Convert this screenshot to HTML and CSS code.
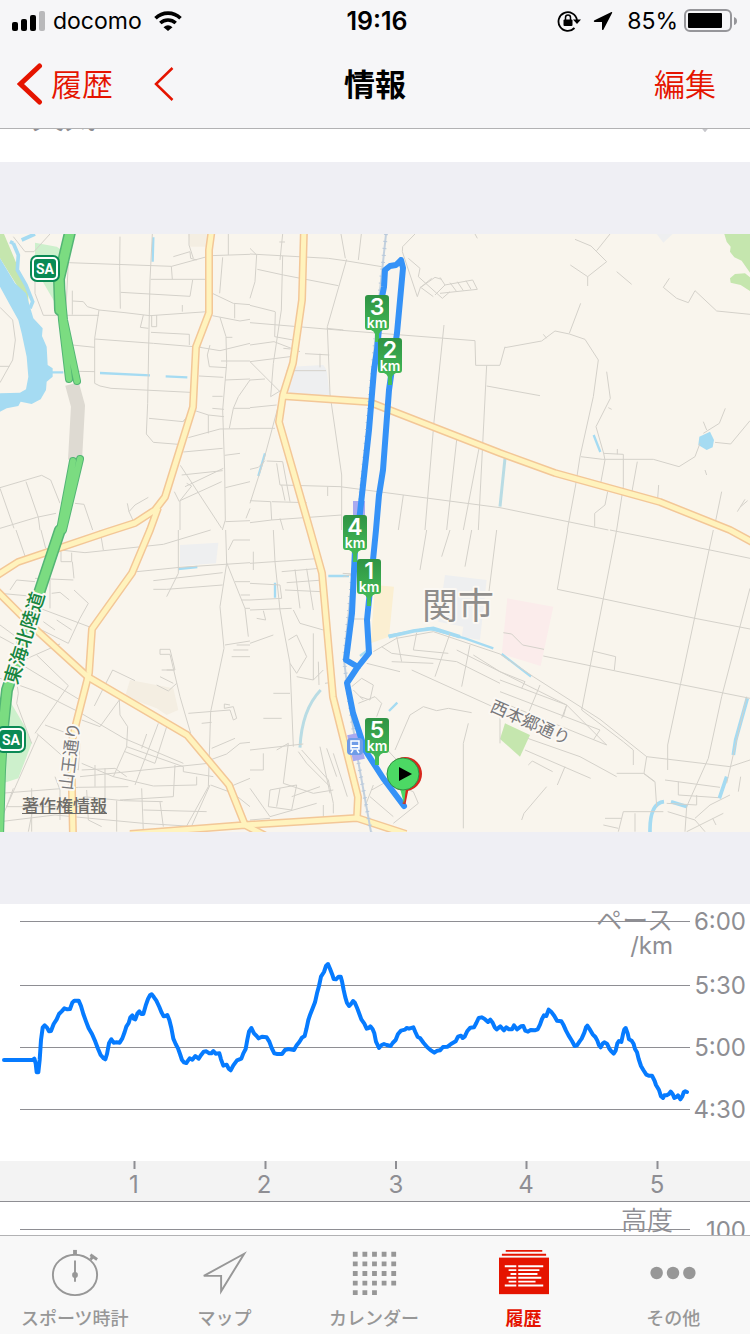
FILE: index.html
```
<!DOCTYPE html>
<html lang="ja">
<head>
    <meta charset="UTF-8">
    <meta name="viewport" content="width=device-width, initial-scale=1.0">
    <title>情報</title>
    <link rel="stylesheet" href="styles.css">
</head>
<body>
    <div class="app">
        <header class="header">
            <div class="status-bar">
                <div class="status-left">
                    <svg class="signal" width="34" height="20" viewBox="0 0 34 20" aria-hidden="true">
                        <rect x="0" y="11" width="6" height="9" rx="2"/>
                        <rect x="9" y="8" width="6" height="12" rx="2"/>
                        <rect x="18" y="4" width="6" height="16" rx="2"/>
                        <rect x="27" y="0" width="6" height="20" rx="2" fill="#b9b9bb"/>
                    </svg>
                    <span>docomo</span>
                    <svg class="wifi" width="28" height="20" viewBox="0 0 28 20" aria-hidden="true">
                        <path d="M1.500 7.200C8.500 .4 19.500 .4 26.500 7.200M6.300 12C10.800 8 17.200 8 21.700 12" fill="none" stroke="#000" stroke-width="3.600"/>
                        <path d="M9.500 16.200Q14 12.200 18.500 16.200L14 20Z"/>
                    </svg>
                </div>
                <time class="clock">19:16</time>
                <div class="status-right">
                    <svg width="24" height="22" viewBox="0 0 24 22" aria-hidden="true">
                        <path d="M17.500 18A9.300 9.300 0 1 1 20 10" fill="none" stroke="#000" stroke-width="1.800"/>
                        <path d="M16 9.500h8l-4 4.500z"/>
                        <rect x="6.500" y="9.500" width="9" height="6.500" rx="1"/>
                        <path d="M8.500 10V7.500a2.500 2.500 0 0 1 5 0V10" fill="none" stroke="#000" stroke-width="1.500"/>
                    </svg>
                    <svg class="location" width="20" height="20" viewBox="0 0 20 20" aria-hidden="true">
                        <path d="M18.500 1 1 9.500Q.4 10.500 1.500 11H9V18.500Q9.800 19.500 10.500 18.500L19.200 1.700Q19.300 .7 18.500 1Z"/>
                    </svg>
                    <span>85%</span>
                    <svg width="54" height="24" viewBox="0 0 54 24" aria-hidden="true">
                        <rect x="1" y="1" width="46" height="21" rx="5" fill="none" stroke="#96969a" stroke-width="2"/>
                        <rect x="4" y="4" width="34" height="15" rx="1"/>
                        <path d="M50 8q3 1 3 4t-3 4z" fill="#96969a"/>
                    </svg>
                </div>
            </div>
            <div class="nav-bar">
                <div class="nav-left">
                    <a class="back" href="#history">
                        <svg width="26" height="42" viewBox="0 0 26 42" aria-hidden="true">
                            <path d="M22.500 3 3.500 21l19 18" fill="none" stroke="#e51400" stroke-width="5" stroke-linecap="round"/>
                        </svg>
                        <span>履歴</span>
                    </a>
                    <button class="previous" type="button" aria-label="前へ">
                        <svg width="20" height="34" viewBox="0 0 20 34" aria-hidden="true">
                            <path d="M18.500 1 2 17l16.500 16" fill="none" stroke="#e51400" stroke-width="2.500"/>
                        </svg>
                    </button>
                </div>
                <h1>情報</h1>
                <button class="edit" type="button">編集</button>
            </div>
        </header>

        <main class="content">
            <a class="weather" href="#weather">
                <span>天気</span>
                <svg width="28" height="28" viewBox="0 0 28 28" aria-hidden="true">
                    <path d="M4 14l10 12 10-12" fill="none" stroke="#c7c7cc" stroke-width="3"/>
                </svg>
            </a>

            <section class="map" aria-label="コース">
                <svg class="map-canvas" viewBox="0 234 750 598">
                    <defs>
                        <linearGradient id="flag" x1="0" y1="0" x2="0" y2="1">
                            <stop offset="0" stop-color="#2f9344"/>
                            <stop offset="1" stop-color="#46c25a"/>
                        </linearGradient>
                        <path id="km-flag" d="M-9 0H9Q12 0 12 3V32Q12 35 9 35H6Q3 36 2 39V47H-2V39Q-3 36 -6 35H-9Q-12 35 -12 32V3Q-12 0 -9 0Z" fill="url(#flag)"/>
                        <g id="sa-sign">
                            <rect x="-15" y="-14" width="30" height="27" rx="7" fill="#0a8a55"/>
                            <rect x="-12" y="-11" width="24" height="21" rx="4" fill="#0a8a55" stroke="#fff" stroke-width="2"/>
                            <text class="sa" y="5">SA</text>
                        </g>
                    </defs>

                    <!-- parks, blocks and water -->
                    <g transform="translate(0 230) scale(.33333)">
                        <path class="wood" d="M0 12H12L45 90 85 190V230L50 165 0 85Z"/>
                        <path class="park" d="M105 38 170 50 185 60 165 218 105 115Z"/>
                        <path class="sand" d="M565 12H620V50H570Z"/>
                        <path class="water" d="M0 85 45 160 78 190 100 265 128 295 126 318 140 350 143 405 158 415V440L140 455 138 480 122 508 95 522 62 515 55 528 20 535 0 545V490L60 488 78 478 85 440 80 380 65 310 55 270 30 225 0 170Z"/>
                        <path class="stream wide" d="M40 40 55 75 52 120 78 165 98 215 90 235M40 40 30 35M65 30 105 12"/>
                        <path class="stream" d="M155 427H190M300 429 450 436M497 439 562 442M460 22 458 95"/>
                        <path class="block" d="M875 410 970 405 980 420 990 498 865 490Z"/>
                        <path class="stream" d="M795 670 775 738M1781 615 1801 666"/>
                        <path class="stream wide faint" d="M1515 685 1500 830"/>
                        <path class="wood" d="M2173 12H2250V128L2225 92 2203 82 2190 65 2192 50 2180 35Z"/>
                        <path class="wood" d="M2190 145 2205 132 2235 130 2250 142V183L2222 165 2192 158Z"/>
                        <path class="water" d="M2098 620 2130 605 2142 630 2138 652 2120 660 2095 645Z"/>
                        <path class="block" d="M1970 12H2018L1990 38Z"/>
                    </g>
                    <g transform="translate(0 530) scale(.33333)">
                        <path class="park" d="M22 500 75 590 95 640 55 745 0 763V500Z"/>
                        <path class="block" d="M540 45 655 38 648 100 540 108Z"/>
                        <path class="sand" d="M390 450 520 475 535 540 500 555 470 535 375 500Z"/>
                        <path class="stream" d="M535 117 592 111M825 158V203M985 138H1047"/>
                        <path class="stream faint wide" d="M962 480Q905 540 900 653"/>
                        <path class="yard" d="M1125 165 1182 170 1167 320 1112 340Z"/>
                        <path class="block" d="M1335 135 1460 150 1440 330 1385 320 1390 290 1315 275Z"/>
                        <path class="hospital" d="M1522 205 1660 230 1622 408 1505 372Z"/>
                        <path class="stream wide" d="M1166 320 1240 303 1300 295 1380 320"/>
                        <path class="stream" d="M1165 317 1285 295 1395 325 1480 355M1505 372 1593 440"/>
                        <path class="stream" d="M1080 378 1110 355M1167 543 1192 518"/>
                        <path class="wood" d="M1515 580 1590 615 1560 680 1500 627Z"/>
                        <path class="stream wide" d="M1950 908Q1948 820 1992 815M2013 815 2062 830M2158 805 2180 740M2200 675 2207 630 2242 505"/>
                    </g>

                    <!-- small streets, north half -->
                    <g class="street" transform="translate(0 230) scale(.33333)">
                        <path d="M205 98 515 109 632 77M205 98 198 235M105 115V190L130 256H297M40 20 75 65 102 65 150 12M360 20 359 110 361 236M457 12 450 150 447 300 443 520 439 612 460 637 535 643M514 109 517 148M452 148H615M362 187 570 199 578 150M520 80 570 65 572 85 590 90M567 12V45L580 85M217 182 217 254M217 213 250 215 262 230 297 240 375 248 450 257 622 245M547 225V245M430 255 421 292 445 295M455 257 455 290H470V255M297 240 284 325V460L300 468 333 475 570 487M284 327 460 340 605 352M217 345 284 352M453 307 568 313V345M235 424 285 425M0 232 38 270 46 330 38 390 0 458M0 409H28"/>
                        <path d="M632 77 750 73M685 12V75M668 82 659 190M637 190 700 220 750 224M704 222V265M637 257 720 273 750 268M660 262 678 320 680 400 668 540 674 720 676 870 667 900M678 322H697M600 352 660 362 750 340M630 345 622 375 628 410 680 413M663 393H750M597 438 670 442M675 450 750 447M750 450 715 500 700 535 688 595M637 499H668M637 535 672 538M700 535H750M588 543 625 555 672 560M625 555V610M587 543 550 572M447 565 550 575 580 533M565 623 660 597 750 596M550 666 668 655M545 735 668 722M674 676 720 670M541 706 665 895M555 770 670 715 M560 760 575 768 540 812V900M676 773 750 755M523 785 538 815M540 812 665 755M738 865 750 835M676 875 750 872"/>
                        <path d="M0 773 125 736 152 750 180 820M0 775 42 895M78 755 115 862 120 900M0 895 110 862 168 850M225 820 252 823 278 900M382 820 387 845 400 873M387 845 405 825 445 802"/>
                        <path d="M750 55 770 75 765 155 750 205M848 12 840 90M838 36H855M750 72 985 85 1035 92 1145 110M1023 12 1036 85M1084 12 1075 90M1040 88 982 290 990 492M772 118 850 135 1015 167M848 78 844 240 820 400 812 500 845 480M750 226 826 245M750 278 1025 301 1425 332 1427 406H1500M980 295 1030 300M826 246 824 320 890 332M750 345 822 335 900 365M850 355 872 357M750 395 870 380M750 395 845 490M750 450 795 447M750 533 830 525M750 595H825M860 422H978M915 371 988 375M960 371V412M990 492 1025 735 1025 900M845 490 790 695 750 820"/>
                        <path d="M1332 285 1302 575 1275 900M1245 12 1208 50 1207 65 1252 200 1262 170M1225 85 1260 115 1255 140 1327 205 1350 185M1295 145 1262 172 1300 200M1320 142 1335 165 1305 195M1335 165 1418 150 1432 178 1320 190M1350 158 1370 185M1372 155 1390 182M1398 152 1413 178M1265 170 1305 142 1325 148M1425 12 1432 25M1515 350 1500 405M1460 406 1435 900M1460 468 1620 497"/>
                        <path d="M1725 28 1773 48 1820 95 1763 140 1711 105M1830 12 1790 62M1763 140V168M1850 125 1895 163M1742 220 1708 310M1630 313 1640 325M1515 353 1625 333 1665 303 1708 312 1755 328 1795 390 1780 500 1740 680 1727 765 1702 900M1820 425 1831 505 1788 590 1811 670 1815 690 1802 760M1825 533 1835 538M2008 145 1990 172 2030 205 2065 218 2085 182 2150 243 2250 253M1742 680 1808 688H1960L2037 710 2085 680 2100 640M2176 535 2158 580 2110 610M2110 575 2120 600M2145 637 2192 642 2250 572M1810 670 1870 673V770L1850 900M1852 657V673M1912 695 1895 790M1976 765 1973 805M1823 785 1815 825 1784 850V890M2165 785 2145 882M2115 720 2120 735M2212 845 2235 808M2222 830 2243 812"/>
                        <path d="M800 693 848 695 870 815M830 700 840 765 1020 770 1500 833 1825 900M845 765 855 812M983 770V798M750 718 775 712 795 692M750 812 812 815 815 870 750 878M815 870 1025 855M815 815 920 818M1370 630 1340 900M1437 655 1390 900M1210 795 1195 900M840 865 850 900"/>
                    </g>

                    <!-- small streets, south half -->
                    <g class="street" transform="translate(0 530) scale(.33333)">
                        <path d="M48 0 75 78M123 0 137 55M180 60 255 68 490 43 632 0M183 65V95H215V68M217 95 222 145M105 145 220 150M30 180 50 150 105 155M0 190 110 200M150 150V235H150M155 190 180 187 208 210M222 180 265 220 240 265 205 340 125 300M112 232 272 292M130 275 165 300M170 270 215 300M300 0 310 60M0 285 45 318M0 320 55 350M60 395 180 342M0 445 125 490 235 545 372 625 550 700M110 375 205 467 105 610M75 410 240 510M45 415 55 490 50 520 95 640M283 528 338 420 405 452M358 510 300 590 245 570M358 510 360 555 383 590 380 650 340 740 245 700M240 640 235 720M135 585 215 615M110 610 235 720M115 615 0 875M475 580 405 765M500 590 465 700 375 665M440 612 425 655M380 650 550 710M550 710V725L640 740M340 740 460 768 590 765 590 740"/>
                        <path d="M0 790 235 772 385 770M40 775 20 830H240M95 775V905M100 830 85 905M165 740 180 780V870M240 740 625 700M245 720 345 715 380 740M285 705V770M315 715V850H250M250 800 370 812 488 815M350 812V905M425 775 430 905M480 815 490 890M525 705 520 800 360 810M430 840 620 845M0 875 165 855 430 880 590 890M260 780 265 870 305 890"/>
                        <path d="M560 888 625 770 632 545 672 355 660 230 680 100 677 0M575 888 630 765M630 690 680 672 720 640 750 637M635 655 705 625M680 98 735 235 745 320M565 550 690 540M605 580 635 577M690 540 700 570 710 565 700 530 673 535V522L690 525M500 420H525L510 358H480V373H510L540 500 572 610M485 420H520M470 465 505 483 530 460M480 440 520 460M410 125 540 112 750 98M460 152 668 128M535 0V130L500 200M460 178H500L668 165M685 60 700 30H750M705 155H750M722 195H750M725 210H750M735 235H750M675 345 750 333M710 345H750M695 380H750M700 360H745M632 765 700 790 750 830M690 770 750 745"/>
                        <path d="M820 0 825 95 840 240 870 400 880 650M750 100 965 85M845 125 960 115 970 150 860 158M885 118 900 235M920 116 940 240M855 180 965 185M750 160 840 165 845 205 750 210M760 65V120M750 240 875 235M750 340 820 315M790 242 797 270 770 265M880 240 900 280 970 300M865 330 890 315 920 380 890 430 870 400M955 395 957 465M820 490H870M890 440 940 450 970 420M940 310V450M975 460 995 457M845 565H790M750 660 910 642M790 670V720H750M1028 130 1060 132 1030 140M1055 267H1095M1000 670 1042 800M960 650 990 790M980 655 1010 740M830 660 865 640 850 760 940 790 1000 780"/>
                        <path d="M905 660 985 750 1000 820 1000 850M895 665 920 700 990 770M750 775 810 860 950 820M810 780 890 765 875 840 805 830ZM840 775 830 830M875 800 960 770M970 825V860M750 870 810 865M1055 470 1085 445 1120 465 1110 510 1080 500M1075 520 1125 500 1145 520 1130 560M1060 480 1090 510M1185 660 1230 555 1270 530 1310 542 1345 535 1415 548M1405 580 1390 640V895M1115 780 1160 755 1240 785 1255 820 1180 880M1110 800 1180 860M1120 765 1095 830M1135 630 1190 690M1110 620 1125 650M1060 680 1110 640"/>
                        <path d="M1280 0 1260 120M1350 0 1325 80M1415 0 1395 110M1490 0 1465 200M1120 365 1190 325 1300 305 1500 372 1600 440 1800 568 1940 680 1932 730 1965 755 1970 830M1145 350 1175 370 1370 395 1500 460M1250 308 1240 360 1345 370M1175 395 1300 400M1100 400 1200 425M1190 320 1205 395M1350 310 1305 440M1410 345 1385 470M1235 420 1500 540 1500 640M1370 360 1700 525 1690 560M1420 375 1500 425 1575 455 1565 475M1500 450 1700 525 1820 645M1500 485 1800 600 1780 630M1620 465 1585 550M1700 525 1685 565M1820 645 1500 515"/>
                        <path d="M1703 0 1672 178 1807 206 2085 265 2250 297M1850 0 1745 540M2140 0 2042 460 2003 645V720M1830 0 2130 60 2250 85M2250 175 2165 500 2125 685 2060 830M1630 378 2040 463 2250 505M1510 308 1535 312 1568 345 1632 358M1778 363 1847 380 1843 420M2240 500 2180 760M1745 540 1870 635 1900 660V705M1940 680 2190 710 2250 690M1583 625 1740 680 1850 740M1850 730H1930L1963 755M1575 660 1772 745M1695 710 1672 765M1585 705 1597 693 1658 725M1640 770 1572 850 1565 870M1995 750 2160 772M2035 755V795L2155 803M2090 795V825L2000 820M2003 845 2085 870 2115 905M1990 845H1870L1855 905M1815 865H1865M1810 885 1855 895M1905 850V905M2060 830 2055 905M2085 865 2130 825 2190 795M2060 905 2170 850M2138 865 2148 885M2222 740 2215 785"/>
                    </g>

                    <!-- main roads -->
                    <g class="road-edge">
                        <path d="M212 228 209 250V313L196 347 193 407 165 497 155 510 135 523 107 532 18 562-4 576M158 508 150 530 132 573 92 629 89 673 77 720 71 745 73 836"/>
                        <path d="M-4 590 33 627 88 677 187 735 229 785 245 825 266 836M130 834 245 825 357 818 406 834"/>
                        <path d="M304 228 302 300 293 363 283 395 279 422 310 530 322 573 333 697 358 797 357 818M283 396 369 402 500 453 555 473 660 502 730 530 754 543"/>
                    </g>
                    <g class="road">
                        <path d="M212 228 209 250V313L196 347 193 407 165 497 155 510 135 523 107 532 18 562-4 576M158 508 150 530 132 573 92 629 89 673 77 720 71 745 73 836"/>
                        <path d="M-4 590 33 627 88 677 187 735 229 785 245 825 266 836M130 834 245 825 357 818 406 834"/>
                        <path d="M304 228 302 300 293 363 283 395 279 422 310 530 322 573 333 697 358 797 357 818M283 396 369 402 500 453 555 473 660 502 730 530 754 543"/>
                    </g>

                    <!-- expressway -->
                    <path class="tunnel" d="M72 384 78 406 75 460"/>
                    <path class="way-wide-edge" d="M71 228 59 279 60 310M60 530 45 575 7 690 1 745"/>
                    <path class="way-edge" d="M59 279 62 320 69 379M60 279 64 320 77 381M73 461 60 530M80 459 63 530M7 690 2 770 0 836"/>
                    <path class="way-wide" d="M71 228 59 279 60 310M60 530 45 575 7 690 1 745"/>
                    <path class="way" d="M59 279 62 320 69 379M60 279 64 320 77 381M73 461 60 530M80 459 63 530M7 690 2 770 0 836"/>

                    <!-- railway and stations -->
                    <path class="rail" d="M386 234 379 300 366 440 357 530 344 660 349 700 358 760 371 832"/>
                    <path class="rail-ties" d="M386 234 379 300 366 440 357 530 344 660 349 700 358 760 371 832"/>
                    <path class="platform" d="M359 501V516M353 734 359 760"/>

                    <!-- route -->
                    <path class="route" d="M404 806 383 778 365 750 353 713 347 683 357 668 369 653 367 620 369 600 376 530 379 495 383 470 389 390 397 333 403 268 401 260 396 265 390 266 385 270 384 287 382 297 377 350 374 370 369 430 360 513 355 550 352 613 346 660 358 667"/>

                    <rect x="347" y="738" width="16" height="17" rx="4" fill="#6f9ce8"/>
                    <path d="M351 741h8v8h-8zM353 750l-2 3M357 750l2 3" fill="none" stroke="#fff" stroke-width="1.500"/>
                    <path d="M351 746h8" stroke="#fff" stroke-width="2"/>

                    <!-- place names -->
                    <text class="city" x="458" y="619">関市</text>
                    <text class="street-name" transform="translate(528 728) rotate(24)">西本郷通り</text>
                    <text class="street-name" transform="translate(76 757) rotate(-83)">山王通り</text>
                    <text class="way-name" transform="translate(31 640) rotate(-73)">東海北陸道</text>
                    <use href="#sa-sign" x="45" y="269"/>
                    <use href="#sa-sign" x="11" y="740"/>

                    <!-- kilometre flags -->
                    <g transform="translate(377 295)"><use href="#km-flag"/><text class="km" y="20">3</text><text class="unit" y="33">km</text></g>
                    <g transform="translate(390 338)"><use href="#km-flag"/><text class="km" y="20">2</text><text class="unit" y="33">km</text></g>
                    <g transform="translate(355 515)"><use href="#km-flag"/><text class="km" y="20">4</text><text class="unit" y="33">km</text></g>
                    <g transform="translate(369 559)"><use href="#km-flag"/><text class="km" y="20">1</text><text class="unit" y="33">km</text></g>
                    <g transform="translate(377 718)"><use href="#km-flag"/><text class="km" y="20">5</text><text class="unit" y="33">km</text></g>

                    <!-- start pin on top of the goal pin -->
                    <path d="M407 789 404 804" stroke="#d8261c" stroke-width="3"/>
                    <circle cx="405" cy="774" r="17" fill="#d8261c"/>
                    <path d="M400 788H406L404 804Z" fill="#4cd964"/>
                    <circle cx="403" cy="774" r="16" fill="#4cd964" stroke="#2f9344"/>
                    <path d="M399 767V781L412 774Z"/>
                </svg>
                <a class="copyright" href="#legal">著作権情報</a>
            </section>

            <section class="chart" aria-label="ペース">
                <svg viewBox="0 904 750 257">
                    <path class="grid" d="M20 921.500H690M20 985.500H690M20 1047.500H690M20 1109.500H690"/>
                    <text class="axis end title" x="673" y="930">ペース</text>
                    <text class="axis end" x="673" y="954">/km</text>
                    <text class="axis end" x="746" y="930">6:00</text>
                    <text class="axis end" x="746" y="994">5:30</text>
                    <text class="axis end" x="746" y="1056">5:00</text>
                    <text class="axis end" x="746" y="1118">4:30</text>
                    <polyline class="pace" transform="translate(0 900) scale(.33333)" points="12,480 98,480 103,476 107,490 110,517 115,517 119,480 123,420 128,383 134,376 141,383 147,394 153,393 161,372 170,358 177,342 185,334 193,325 202,328 210,327 217,308 223,302 236,302 243,318 250,342 258,364 266,385 276,402 286,425 294,446 302,465 311,475 316,478 321,462 327,430 334,418 341,428 350,427 359,428 367,415 374,396 379,380 386,369 391,352 397,346 401,356 406,358 412,341 418,334 424,342 430,342 437,317 444,297 450,286 455,283 462,292 469,302 478,321 485,338 491,349 497,348 502,345 508,360 514,384 520,416 527,432 534,445 540,462 546,480 552,487 559,489 564,482 569,475 577,479 586,468 596,476 604,464 611,455 619,454 628,460 634,460 640,453 647,461 658,460 663,478 670,497 680,494 686,506 692,511 700,496 711,481 724,476 730,460 737,447 742,419 747,395 754,384 762,400 770,408 776,415 786,410 800,412 808,425 815,444 823,460 832,462 846,462 855,450 865,447 882,450 890,436 898,426 906,413 914,408 919,388 925,360 930,345 938,325 945,307 951,280 957,258 963,230 972,216 978,198 984,192 990,206 997,224 1001,237 1008,238 1016,230 1022,230 1026,244 1031,270 1036,292 1041,309 1047,318 1053,312 1059,303 1065,309 1071,323 1077,339 1084,358 1093,371 1100,386 1106,384 1111,379 1118,388 1123,400 1128,425 1137,444 1145,435 1152,432 1160,435 1172,438 1178,429 1187,420 1194,402 1203,392 1215,389 1220,384 1227,386 1240,382 1246,396 1253,411 1260,414 1271,429 1282,442 1294,452 1303,458 1312,452 1320,451 1329,441 1343,440 1353,432 1367,424 1374,410 1383,407 1388,414 1394,410 1402,393 1411,383 1422,382 1429,369 1436,354 1445,352 1453,356 1464,366 1471,359 1478,368 1484,382 1490,388 1501,379 1512,391 1519,382 1527,388 1536,388 1542,376 1551,388 1563,379 1570,378 1576,392 1584,395 1592,390 1604,391 1613,388 1620,374 1626,357 1632,346 1639,348 1646,329 1655,337 1663,348 1671,362 1684,364 1691,376 1698,392 1706,407 1716,423 1724,438 1731,436 1739,424 1745,416 1753,398 1758,382 1762,377 1770,389 1778,403 1786,411 1792,422 1797,436 1802,442 1808,431 1813,427 1821,431 1828,446 1835,455 1841,461 1847,452 1852,430 1857,423 1864,426 1869,403 1873,388 1877,384 1883,400 1887,418 1895,422 1901,432 1905,447 1911,457 1916,477 1923,498 1930,510 1939,524 1946,527 1956,527 1964,543 1968,555 1977,570 1983,589 1989,594 1993,586 2000,586 2007,582 2012,575 2018,582 2023,594 2029,591 2034,586 2041,598 2047,589 2051,577 2056,574 2061,576"/>
                </svg>
                <svg class="distance-axis" viewBox="0 0 750 40">
                    <path class="tick" d="M134.500 0V8M265.500 0V8M396 0V8M526.500 0V8M657.500 0V8"/>
                    <text class="axis middle" x="134" y="32">1</text>
                    <text class="axis middle" x="264" y="32">2</text>
                    <text class="axis middle" x="396" y="32">3</text>
                    <text class="axis middle" x="526" y="32">4</text>
                    <text class="axis middle" x="657" y="32">5</text>
                </svg>
            </section>

            <section class="chart" aria-label="高度">
                <svg viewBox="0 0 750 257">
                    <path class="grid" d="M20 27.500H690M20 91.500H690M20 153.500H690"/>
                    <text class="axis end title" x="673" y="28">高度</text>
                    <text class="axis end" x="746" y="37">100</text>
                </svg>
            </section>
        </main>

        <nav class="tab-bar">
            <a class="tab" href="#stopwatch">
                <svg width="52" height="52" viewBox="0 0 52 52" aria-hidden="true">
                    <ellipse cx="26" cy="28" rx="23" ry="21" fill="none" stroke="currentColor" stroke-width="2"/>
                    <path d="M26 2v5" stroke="currentColor" stroke-width="4"/>
                    <path d="M26 13v22" stroke="currentColor" stroke-width="2"/>
                    <circle cx="26" cy="28" r="3" fill="currentColor"/>
                    <path d="M42 12l4-4M42 7l7 5" stroke="currentColor" stroke-width="3"/>
                </svg>
                <span>スポーツ時計</span>
            </a>
            <a class="tab" href="#map">
                <svg width="52" height="52" viewBox="0 0 52 52" aria-hidden="true">
                    <path d="M47 6 5 29H23V45Z" fill="none" stroke="currentColor" stroke-width="2"/>
                </svg>
                <span>マップ</span>
            </a>
            <a class="tab" href="#calendar">
                <svg width="52" height="52" viewBox="0 0 52 52" aria-hidden="true">
                    <path d="M4 6.500H50M4 16.500H50M4 26.500H50M4 36.500H50M4 46.500H29" stroke="currentColor" stroke-width="5" stroke-dasharray="5 5"/>
                </svg>
                <span>カレンダー</span>
            </a>
            <a class="tab active" href="#history">
                <svg width="52" height="52" viewBox="0 0 52 52" aria-hidden="true">
                    <path d="M7 3H45M3 7H49" stroke="currentColor" stroke-width="2"/>
                    <rect x="0" y="10" width="52" height="38" fill="currentColor"/>
                    <path d="M6 19H18M20 19H46M10 23H18M20 23H42M12 27H18M20 27H40M8 31H18M20 31H44M10 35H18M20 35H38M6 39H18M20 39H46" stroke="#fff" stroke-width="2"/>
                </svg>
                <span>履歴</span>
            </a>
            <a class="tab" href="#other">
                <svg width="52" height="52" viewBox="0 0 52 52" aria-hidden="true">
                    <g fill="currentColor">
                        <circle cx="9" cy="26" r="6.500"/>
                        <circle cx="26" cy="26" r="6.500"/>
                        <circle cx="43" cy="26" r="6.500"/>
                    </g>
                </svg>
                <span>その他</span>
            </a>
        </nav>
    </div>
</body>
</html>
```
FILE: styles.css
```
/* General Styles */
* {
    box-sizing: border-box;
}

body {
    margin: 0;
    background-color: #efeff4;
    font-family: Inter, "Noto Sans CJK JP", sans-serif;
    color: #000;
}

a {
    color: inherit;
    text-decoration: none;
}

button {
    padding: 0;
    border: none;
    background: none;
    font: inherit;
    color: inherit;
    cursor: pointer;
}

svg {
    display: block;
}

.app {
    display: flex;
    flex-direction: column;
    height: 100vh;
}

/* Header */
.header {
    background-color: #f6f6f8;
    border-bottom: 1px solid #b2b2b4;
}

.status-bar {
    display: grid;
    grid-template-columns: 1fr auto 1fr;
    align-items: center;
    height: 40px;
    padding: 0 12px;
    font-size: 23px;
    line-height: 42px;
}

.status-left,
.status-right {
    display: flex;
    align-items: center;
}

.signal {
    margin-right: 7px;
}

.wifi {
    margin-left: 12px;
}

.clock {
    padding-left: 4px;
    font-size: 25px;
    font-weight: 600;
}

.status-right {
    justify-content: flex-end;
}

.location {
    margin: 0 14px 0 12px;
}

.status-right span {
    margin-right: 6px;
}

/* Navigation */
.nav-bar {
    display: grid;
    grid-template-columns: 1fr auto 1fr;
    align-items: center;
    height: 88px;
    padding: 0 17px;
    font-size: 31px;
}

.nav-left {
    display: flex;
    align-items: center;
    gap: 41px;
    color: #e51400;
}

.back {
    display: flex;
    align-items: center;
    gap: 8px;
    font-weight: 350;
}

.back span,
.nav-bar h1,
.edit {
    padding-bottom: 4px;
}

.nav-bar h1 {
    margin: 0;
    font-size: 31px;
    font-weight: 700;
}

.edit {
    justify-self: end;
    margin-right: 17px;
    font-weight: 350;
    color: #e51400;
}

/* Scrolling content, the first row is half under the header */
.content {
    flex: 1;
    min-height: 0;
    overflow: hidden;
}

.weather {
    display: flex;
    align-items: center;
    justify-content: space-between;
    height: 88px;
    margin-top: -55px;
    padding: 0 31px 0 32px;
    background-color: #fff;
    font-size: 32px;
    color: #8e8e93;
}

.weather span {
    padding-bottom: 8px;
}

/* Map */
.map {
    position: relative;
    margin: 72px 0;
}

.map-canvas {
    width: 100%;
    background-color: #f9f5ed;
}

.street path {
    fill: none;
    stroke: #d4d1ca;
    stroke-width: 3;
}

.water {
    fill: #a5dbf2;
}

.stream {
    fill: none;
    stroke: #a5dbf2;
    stroke-width: 7;
}

.stream.wide {
    stroke-width: 11;
}

.stream.faint {
    stroke: #b9dce4;
    stroke-width: 9;
}

.wood {
    fill: #c5e6ae;
}

.park {
    fill: #cdf0cc;
}

.sand {
    fill: #f4eee2;
}

.block {
    fill: #eeeff0;
}

.yard {
    fill: #fbefd2;
}

.hospital {
    fill: #fbeceb;
}

.road-edge,
.road {
    fill: none;
    stroke: #f3c797;
    stroke-width: 8;
    stroke-linejoin: round;
}

.road {
    stroke: #fff3bd;
    stroke-width: 5;
}

.tunnel {
    fill: none;
    stroke: #dedad2;
    stroke-width: 14;
}

.way,
.way-edge,
.way-wide,
.way-wide-edge {
    fill: none;
    stroke: #53b575;
    stroke-width: 8;
    stroke-linecap: round;
    stroke-linejoin: round;
}

.way {
    stroke: #7bdc81;
    stroke-width: 6;
}

.way-wide-edge {
    stroke-width: 12;
}

.way-wide {
    stroke: #7bdc81;
    stroke-width: 9;
}

.rail {
    fill: none;
    stroke: #c2d0de;
    stroke-width: 2;
}

.rail-ties {
    fill: none;
    stroke: #b9c9db;
    stroke-width: 4;
    stroke-dasharray: 1 6;
}

.platform {
    fill: none;
    stroke: #a9aaf0;
    stroke-width: 12;
}

.route {
    fill: none;
    stroke: #3592f7;
    stroke-width: 6;
    stroke-linecap: round;
    stroke-linejoin: round;
}

.city,
.street-name,
.way-name {
    text-anchor: middle;
    paint-order: stroke;
    stroke: #fbf8f3;
    stroke-width: 4;
    stroke-linejoin: round;
}

.city {
    font-size: 36px;
    fill: #8f8d8b;
}

.street-name {
    font-size: 17px;
    fill: #77777a;
}

.way-name {
    font-size: 19px;
    font-weight: 500;
    fill: #17863f;
}

.sa,
.km,
.unit {
    fill: #fff;
    text-anchor: middle;
    font-weight: 600;
}

.sa {
    font-family: Roboto, sans-serif;
    font-size: 14px;
    font-weight: 700;
}

.km {
    font-size: 23px;
}

.unit {
    font-size: 14px;
}

.copyright {
    position: absolute;
    left: 22px;
    bottom: 14px;
    font-size: 17px;
    font-weight: 500;
    line-height: 24px;
    color: #6e6c68;
    text-decoration: underline;
}

/* Charts */
.chart {
    background-color: #fff;
}

.grid {
    stroke: #8e8e93;
    stroke-width: 1;
}

.axis {
    font-size: 24px;
    fill: #8e8e93;
}

.title {
    font-size: 26px;
    font-weight: 350;
}

.end {
    text-anchor: end;
}

.middle {
    text-anchor: middle;
}

.pace {
    fill: none;
    stroke: #067bff;
    stroke-width: 12;
    stroke-linecap: round;
    stroke-linejoin: round;
}

.distance-axis {
    background-color: #f3f3f3;
    border-bottom: 1px solid #8e8e93;
}

.tick {
    stroke: #8e8e93;
    stroke-width: 2;
}

/* Tab Bar */
.tab-bar {
    display: flex;
    padding: 12px 2px 0 0;
    height: 99px;
    background-color: #f8f8f8;
    border-top: 1px solid #b2b2b4;
}

.tab {
    flex: 1;
    display: flex;
    flex-direction: column;
    align-items: center;
    gap: 6px;
    font-size: 18px;
    font-weight: 500;
    line-height: 30px;
    white-space: nowrap;
    color: #979797;
}

.active {
    font-weight: 700;
    color: #e51400;
}
```
